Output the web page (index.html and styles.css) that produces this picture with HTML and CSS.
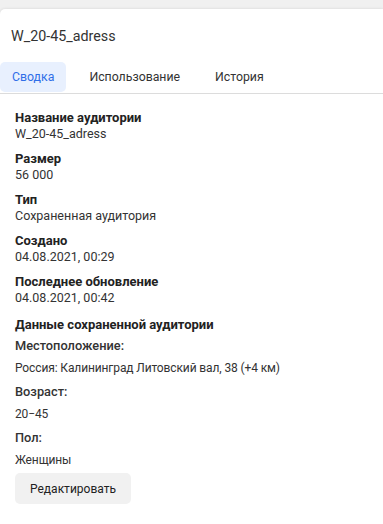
FILE: index.html
```html
<!DOCTYPE html>
<html lang="ru">
<head>
  <meta charset="UTF-8">
  <meta name="viewport" content="width=device-width, initial-scale=1.0">
  <title>W_20-45_adress</title>
  <link rel="stylesheet" href="styles.css">
</head>
<body>
  <div class="card">
    <div class="title">W_20-45_adress</div>

    <div class="tabs">
      <div class="tab active">Сводка</div>
      <div class="tab">Использование</div>
      <div class="tab">История</div>
    </div>

    <div class="content">
      <div class="field">
        <div class="label">Название аудитории</div>
        <div class="value">W_20-45_adress</div>
      </div>
      <div class="field">
        <div class="label">Размер</div>
        <div class="value">56 000</div>
      </div>
      <div class="field">
        <div class="label">Тип</div>
        <div class="value">Сохраненная аудитория</div>
      </div>
      <div class="field">
        <div class="label">Создано</div>
        <div class="value">04.08.2021, 00:29</div>
      </div>
      <div class="field">
        <div class="label">Последнее обновление</div>
        <div class="value">04.08.2021, 00:42</div>
      </div>

      <div class="section-title">Данные сохраненной аудитории</div>
      <div class="detail">
        <div class="detail-label">Местоположение:</div>
        <div class="detail-value">Россия: Калининград Литовский вал, 38 (+4 км)</div>
      </div>
      <div class="detail">
        <div class="detail-label">Возраст:</div>
        <div class="detail-value">20−45</div>
      </div>
      <div class="detail">
        <div class="detail-label">Пол:</div>
        <div class="detail-value">Женщины</div>
      </div>

      <button class="edit">Редактировать</button>
    </div>
  </div>
</body>
</html>
```

FILE: styles.css
```css
html, body { height: 100%; }
body { margin: 0; background: #f0f0f0; font-family: Roboto, Arial, sans-serif; color: #333; overflow: hidden; }
.card { margin-top: 9px; min-height: 100%; background: #fff; border-radius: 5px 0 0 0; box-shadow: 0 0 3px rgba(0,0,0,0.12); }
.title { padding: 17px 11px 0; font-size: 14.3px; line-height: 20px; color: #333; }
.tabs { display: flex; gap: 11px; margin-top: 16px; border-bottom: 1px solid #dcdcdc; padding-bottom: 1px; }
.tab { padding: 0 12px; height: 30px; line-height: 30px; font-size: 12.3px; color: #333; }
.tab.active { background: #e8f0fe; color: #2f6ee8; border-radius: 5px; }
.content { padding: 15px 15px 0; font-size: 13px; }
.field { margin-bottom: 8px; }
.label { font-weight: bold; color: #222; line-height: 17px; }
.value { font-size: 12.5px; line-height: 16px; color: #333; }
.section-title { font-weight: bold; color: #222; line-height: 17px; margin-top: 10px; }
.detail-label { font-weight: 500; font-size: 12.8px; color: #333; line-height: 22px; margin-top: 2px; }
.detail-value { font-size: 12px; letter-spacing: -0.12px; line-height: 22px; color: #333; }
.edit { margin-top: 2px; height: 31px; padding: 0 15px; background: #f1f1f1; border: none; border-radius: 5px; font-family: inherit; font-size: 12px; color: #222; cursor: pointer; }
```
